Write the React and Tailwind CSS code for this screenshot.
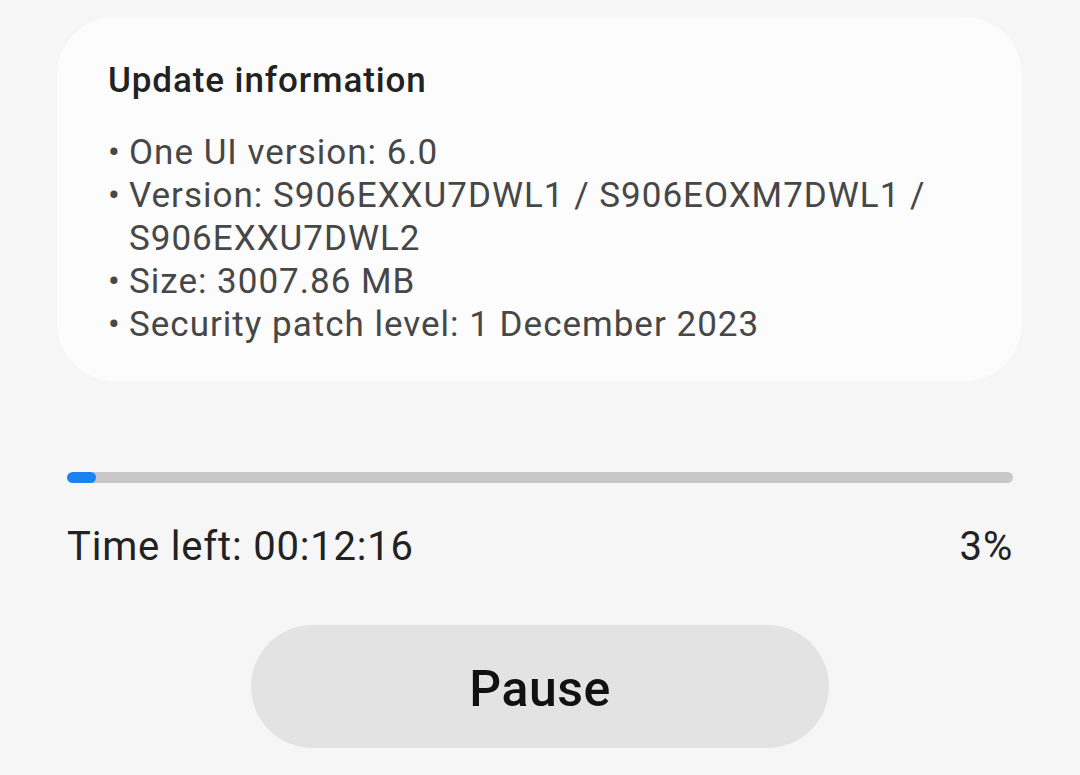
import React from "react";

const items = [
  ["One UI version: 6.0"],
  ["Version: S906EXXU7DWL1 / S906EOXM7DWL1 /", "S906EXXU7DWL2"],
  ["Size: 3007.86 MB"],
  ["Security patch level: 1 December 2023"],
];

export default function App() {
  return (
    <div
      className="w-[1080px] h-[775px] overflow-hidden bg-[#f6f6f6] flex flex-col"
      style={{ fontFamily: "Roboto, 'Noto Sans', sans-serif" }}
    >
      {/* update info card */}
      <div className="mt-[17px] ml-[57px] w-[965px] h-[364px] rounded-[58px] bg-[#fcfcfc] pl-[51px] pt-[42px]">
        <h1 className="text-[35px] leading-[44px] font-medium tracking-[0.9px] text-[#222222]">
          Update information
        </h1>
        <ul className="mt-[28px] text-[35px] leading-[43px] tracking-[1px] text-[#474747]">
          {items.map((lines, i) => (
            <li key={i} className="flex">
              <span className="w-[21px] shrink-0 tracking-normal">•</span>
              <div className="flex flex-col">
                {lines.map((l) => (
                  <span key={l}>{l}</span>
                ))}
              </div>
            </li>
          ))}
        </ul>
      </div>

      {/* progress */}
      <div className="mt-[91px] mx-[67px] h-[11px] rounded-full bg-[#c8c8c8] overflow-hidden">
        <div className="h-full w-[29px] rounded-full bg-[#1a82f2]"></div>
      </div>

      <div className="mt-[42px] mx-[67px] flex justify-between items-center text-[40px] leading-[44px] tracking-[0.8px] text-[#222222]">
        <span>Time left: 00:12:16</span>
        <span>3%</span>
      </div>

      <div className="flex justify-center mt-[56px]">
        <button className="w-[578px] h-[123px] pt-[6px] rounded-full bg-[#e3e3e3] text-[50px] font-medium tracking-[0.5px] text-[#111111]">
          Pause
        </button>
      </div>
    </div>
  );
}
